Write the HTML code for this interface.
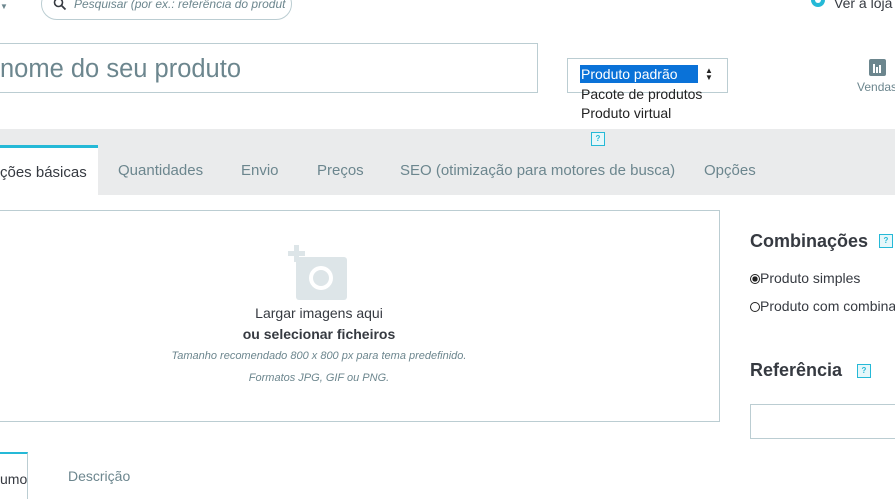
<!DOCTYPE html>
<html><head><meta charset="utf-8"><style>
body{margin:0;width:895px;height:491px;overflow:hidden;background:#fff;font-family:"Liberation Sans",sans-serif;position:relative;color:#363a41}
.a{position:absolute;white-space:nowrap}
.help{position:absolute;width:12px;height:12px;border:1px solid #25b9d7;background:#e6f7fa;color:#25b9d7;font-size:8px;line-height:12px;text-align:center;font-weight:bold}
</style></head><body>
<div class="a" style="left:0;top:2px;font-size:8px;color:#6c868e">▼</div>
<div class="a" style="left:41px;top:-12px;width:249px;height:30px;border:1px solid #bbcdd2;border-radius:16px"></div>
<svg class="a" style="left:53px;top:-3px" width="14" height="14" viewBox="0 0 14 14"><circle cx="5.5" cy="5.5" r="4" fill="none" stroke="#363a41" stroke-width="1.6"/><path d="M8.5 8.5L12.5 12.5" stroke="#363a41" stroke-width="1.8"/></svg>
<div class="a" style="left:74px;top:-3px;font-size:12px;font-style:italic;color:#6c868e">Pesquisar (por ex.: referência do produt</div>
<svg class="a" style="left:809px;top:-4px" width="18" height="14"><circle cx="9" cy="4" r="7" fill="#25b9d7"/><circle cx="9" cy="4" r="3" fill="#fff"/></svg>
<div class="a" style="left:834px;top:-5px;font-size:14px;color:#363a41">Ver a loja</div>

<div class="a" style="left:-2px;top:43px;width:538px;height:48px;border:1px solid #bbcdd2"></div>
<div class="a" style="left:0;top:55px;font-size:25.5px;color:#6c868e">nome do seu produto</div>

<div class="a" style="left:567px;top:58px;width:159px;height:33px;border:1px solid #bbcdd2"></div>
<div class="a" style="left:580px;top:65px;width:118px;height:18px;background:#0a72d8"></div>
<div class="a" style="left:581px;top:66px;font-size:14px;color:#fff">Produto padrão</div>
<div class="a" style="left:705px;top:67px;font-size:8px;line-height:7px;color:#222">▲<br>▼</div>
<div class="a" style="left:581px;top:86px;font-size:14px;color:#222">Pacote de produtos</div>
<div class="a" style="left:581px;top:105px;font-size:14px;color:#222">Produto virtual</div>

<div class="a" style="left:869px;top:59px;width:17px;height:17px;background:#6c868e;border-radius:2px"></div>
<div class="a" style="left:873px;top:64px;width:2px;height:9px;background:#fff"></div>
<div class="a" style="left:876px;top:67px;width:2px;height:6px;background:#fff"></div>
<div class="a" style="left:879px;top:65px;width:2px;height:8px;background:#fff"></div>
<div class="a" style="left:857px;top:80px;font-size:12px;color:#6c868e">Vendas</div>

<div class="a" style="left:0;top:129px;width:895px;height:66px;background:#eaebec"></div>
<div class="help" style="left:591px;top:132px">?</div>
<div class="a" style="left:0;top:145px;width:98px;height:50px;background:#fff;border-top:3px solid #25b9d7;box-sizing:border-box"></div>
<div class="a" style="left:0;top:164px;font-size:15px;color:#363a41">ções básicas</div>
<div class="a" style="left:118px;top:162px;font-size:15px;color:#6c868e">Quantidades</div>
<div class="a" style="left:241px;top:162px;font-size:15px;color:#6c868e">Envio</div>
<div class="a" style="left:317px;top:162px;font-size:15px;color:#6c868e">Preços</div>
<div class="a" style="left:400px;top:162px;font-size:15px;color:#6c868e">SEO (otimização para motores de busca)</div>
<div class="a" style="left:704px;top:162px;font-size:15px;color:#6c868e">Opções</div>

<div class="a" style="left:-2px;top:210px;width:720px;height:210px;border:1px solid #bbcdd2"></div>
<svg class="a" style="left:288px;top:245px" width="60" height="55"><rect x="8" y="12" width="51" height="43" rx="3" fill="#dde5e8"/><rect x="0" y="6" width="17" height="5" fill="#dde5e8"/><rect x="6" y="0" width="5" height="17" fill="#dde5e8"/><circle cx="33" cy="33" r="12" fill="#fff"/><circle cx="33" cy="33" r="8" fill="#dde5e8"/></svg>
<div class="a" style="left:0;width:638px;top:305px;text-align:center;font-size:14px">Largar imagens aqui</div>
<div class="a" style="left:0;width:638px;top:326px;text-align:center;font-size:14px;font-weight:bold">ou selecionar ficheiros</div>
<div class="a" style="left:0;width:638px;top:350px;text-align:center;font-size:11px;font-style:italic;color:#6c868e">Tamanho recomendado 800 x 800 px para tema predefinido.</div>
<div class="a" style="left:0;width:638px;top:372px;text-align:center;font-size:11px;font-style:italic;color:#6c868e">Formatos JPG, GIF ou PNG.</div>

<div class="a" style="left:750px;top:231px;font-size:18px;font-weight:bold">Combinações</div>
<div class="help" style="left:879px;top:234px">?</div>
<div class="a" style="left:750px;top:270px;font-size:14px"><span style="display:inline-block;width:10px;height:10px;border:1px solid #222;border-radius:50%;box-sizing:border-box;vertical-align:-1px;background:radial-gradient(#222 45%,#fff 50%)"></span>Produto simples</div>
<div class="a" style="left:750px;top:298px;font-size:14px"><span style="display:inline-block;width:10px;height:10px;border:1px solid #222;border-radius:50%;box-sizing:border-box;vertical-align:-1px"></span>Produto com combinações</div>
<div class="a" style="left:750px;top:360px;font-size:18px;font-weight:bold">Referência</div>
<div class="help" style="left:857px;top:364px">?</div>
<div class="a" style="left:750px;top:404px;width:160px;height:33px;border:1px solid #bbcdd2"></div>

<div class="a" style="left:-2px;top:452px;width:29px;height:45px;border-top:2px solid #25b9d7;border-right:1px solid #bbcdd2"></div>
<div class="a" style="left:0;top:471px;font-size:14px">umo</div>
<div class="a" style="left:68px;top:468px;font-size:14px;color:#6c868e">Descrição</div>
</body></html>
